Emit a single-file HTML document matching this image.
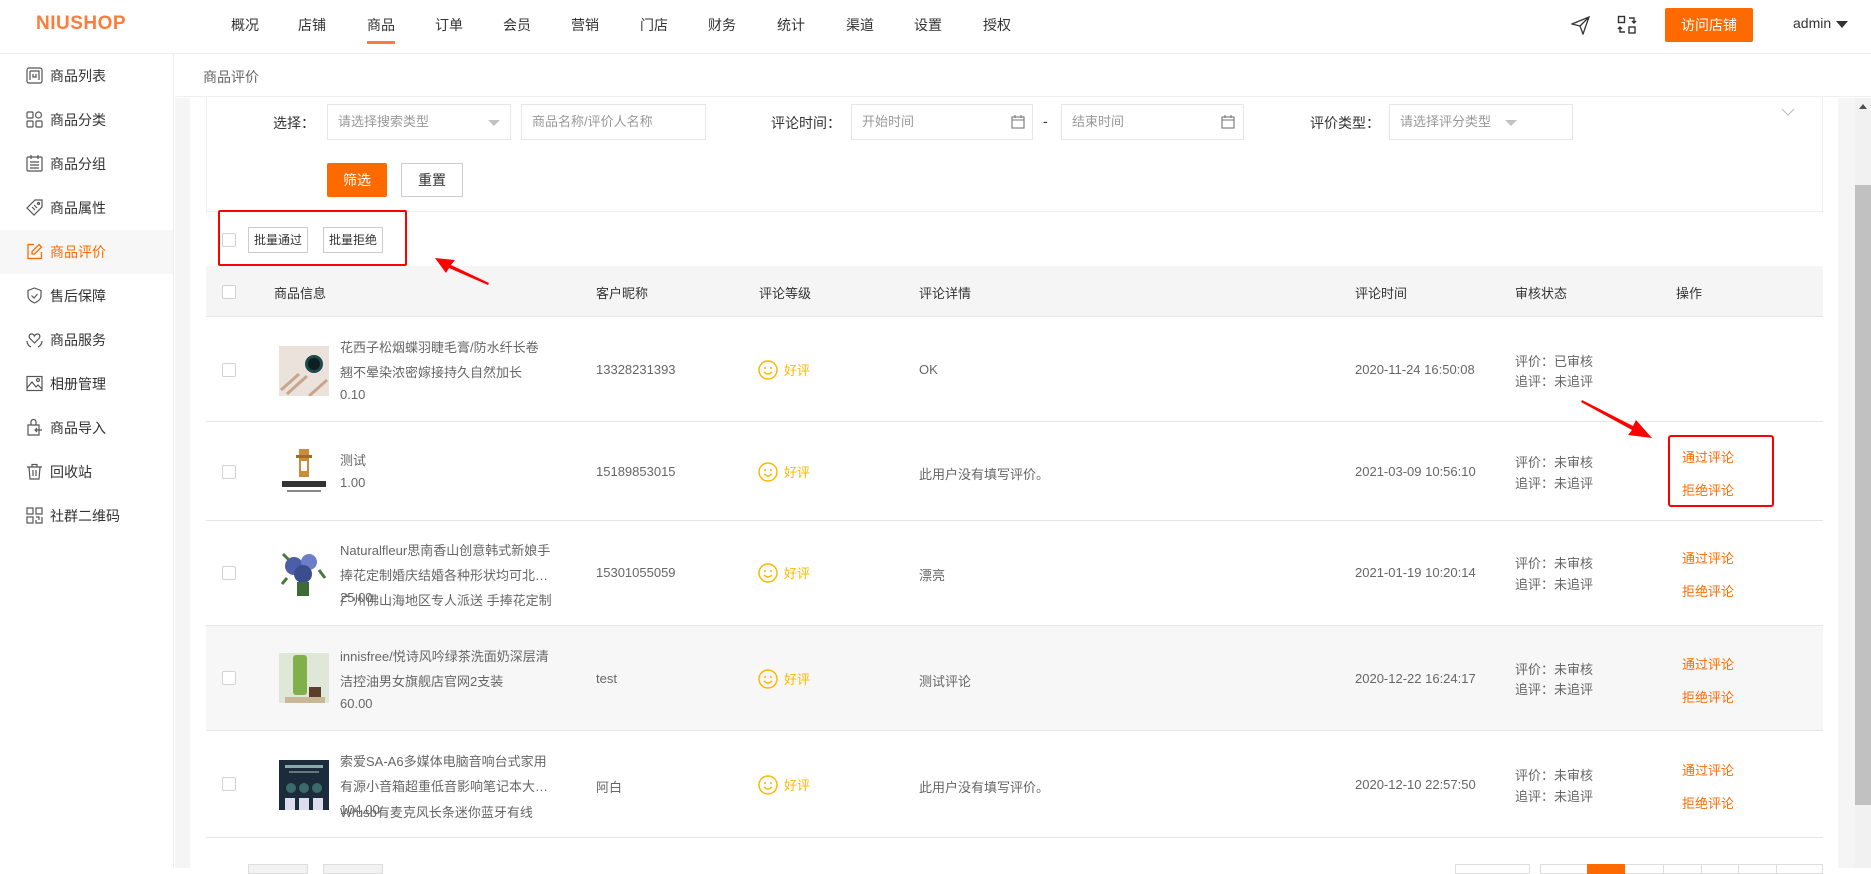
<!DOCTYPE html>
<html><head><meta charset="utf-8">
<style>
*{margin:0;padding:0;box-sizing:border-box}
body{width:1871px;height:868px;overflow:hidden;position:relative;background:#fff;font-family:"Liberation Sans","Noto Sans CJK SC",sans-serif;font-size:14px;color:#333}
.a{position:absolute;white-space:nowrap}
.hdr{left:0;top:0;width:1871px;height:54px;border-bottom:1px solid #eee;background:#fff}
.nav{top:15px;font-size:14px;color:#333}
.side{left:0;top:54px;width:174px;height:814px;border-right:1px solid #eee;background:#fff}
.si{position:absolute;left:0;width:173px;height:44px;line-height:44px;padding-left:50px;color:#333}
.si svg{position:absolute;left:26px;top:13px}
.si.act{background:#f7f7f7;color:#ff6a00}
.inp{position:absolute;border:1px solid #e6e6e6;height:36px;line-height:34px;padding-left:10px;color:#999;background:#fff;font-size:13px}
.btn{position:absolute;border:1px solid #ccc;text-align:center;background:#fff}
.th{top:279px;color:#333;font-size:13px}
.row{position:absolute;left:206px;width:1617px;border-bottom:1px solid #e6e6e6}
.cb{position:absolute;width:14px;height:14px;border:1px solid #d2d2d2;background:#fff;border-radius:2px}
.t{position:absolute;white-space:nowrap;color:#666;font-size:13px}
.ok{color:#ff6a00}
</style></head><body>

<div class="a hdr"></div>
<div class="a" style="left:36px;top:13px;font-size:19px;font-weight:bold;color:#fd7c3c;letter-spacing:0.5px">NIUSHOP</div>
<div class="a nav" style="left:231px">概况</div>
<div class="a nav" style="left:298px">店铺</div>
<div class="a nav" style="left:367px">商品</div>
<div class="a" style="left:367px;top:41px;width:28px;height:3px;background:#fd7c3c"></div>
<div class="a nav" style="left:435px">订单</div>
<div class="a nav" style="left:503px">会员</div>
<div class="a nav" style="left:571px">营销</div>
<div class="a nav" style="left:640px">门店</div>
<div class="a nav" style="left:708px">财务</div>
<div class="a nav" style="left:777px">统计</div>
<div class="a nav" style="left:846px">渠道</div>
<div class="a nav" style="left:914px">设置</div>
<div class="a nav" style="left:983px">授权</div>
<svg class="a" style="left:1571px;top:16px" width="19" height="19" viewBox="0 0 19 19" fill="none" stroke="#333" stroke-width="1.3"><path d="M1 8 L18 1 L12 18 L9 10 Z M9 10 L18 1"/></svg>
<svg class="a" style="left:1617px;top:15px" width="20" height="20" viewBox="0 0 20 20" fill="none" stroke="#333" stroke-width="1.4"><rect x="1.5" y="1.5" width="6" height="6"/><rect x="12" y="12" width="6" height="6"/><path d="M12 3 H17 V8 M15 6 L17 8 L19 6 M8 17 H3 V12 M1 14 L3 12 L5 14"/></svg>
<div class="a" style="left:1665px;top:8px;width:88px;height:34px;background:#ff6a00;border-radius:2px;color:#fff;text-align:center;line-height:34px;font-size:14px">访问店铺</div>
<div class="a" style="left:1793px;top:15px;color:#333">admin</div>
<div class="a" style="left:1836px;top:21px;width:0;height:0;border-left:6px solid transparent;border-right:6px solid transparent;border-top:7px solid #333"></div>

<div class="a side"></div>
<div class="si" style="top:54px"><svg width="17" height="17" viewBox="0 0 17 17" fill="none" stroke="#555" stroke-width="1.2"><rect x="1" y="1" width="15" height="15" rx="2"/><path d="M4 4 V13 M4 4 H13 V13 M7 7 V10 H10 V7"/></svg>商品列表</div>
<div class="si" style="top:98px"><svg width="17" height="17" viewBox="0 0 17 17" fill="none" stroke="#555" stroke-width="1.2"><rect x="1" y="1" width="6" height="6" rx="1"/><circle cx="12.5" cy="4" r="3"/><rect x="1" y="10" width="6" height="6" rx="1"/><rect x="10" y="10" width="6" height="6" rx="1"/></svg>商品分类</div>
<div class="si" style="top:142px"><svg width="17" height="17" viewBox="0 0 17 17" fill="none" stroke="#555" stroke-width="1.2"><rect x="1" y="2" width="15" height="14" rx="1"/><path d="M5 0 V4 M12 0 V4 M4 7 H13 M4 10 H13 M4 13 H13"/></svg>商品分组</div>
<div class="si" style="top:186px"><svg width="17" height="17" viewBox="0 0 17 17" fill="none" stroke="#555" stroke-width="1.2"><path d="M9 1 H16 V8 L8 16 L1 9 Z M6 8 L9 11 M8 6 L11 9"/><circle cx="12.5" cy="4.5" r="1"/></svg>商品属性</div>
<div class="si act" style="top:230px"><svg width="17" height="17" viewBox="0 0 17 17" fill="none" stroke="#ff6a00" stroke-width="1.3"><path d="M8 1.5 H2 V15.5 H15.5 V9"/><path d="M13 1.5 L15.5 4 L8.5 11 H6 V8.5 Z"/></svg>商品评价</div>
<div class="si" style="top:274px"><svg width="17" height="17" viewBox="0 0 17 17" fill="none" stroke="#555" stroke-width="1.2"><path d="M8.5 1 L15 3.5 V9 C15 12 12 14.5 8.5 16 C5 14.5 2 12 2 9 V3.5 Z M5.5 8.5 L8 11 L11.5 7"/></svg>售后保障</div>
<div class="si" style="top:318px"><svg width="17" height="17" viewBox="0 0 17 17" fill="none" stroke="#555" stroke-width="1.2"><path d="M8.5 12 L4 7.5 C2.5 6 3 3 5.5 3 C7 3 8 4 8.5 5 C9 4 10 3 11.5 3 C14 3 14.5 6 13 7.5 Z M1 10 C1 13 3 15 5 16 M16 10 C16 13 14 15 12 16"/></svg>商品服务</div>
<div class="si" style="top:362px"><svg width="17" height="17" viewBox="0 0 17 17" fill="none" stroke="#555" stroke-width="1.2"><rect x="1" y="1.5" width="15" height="14"/><path d="M1 13 L6 7 L10 12 L12 10 L16 14"/><circle cx="12" cy="5" r="1.5"/></svg>相册管理</div>
<div class="si" style="top:406px"><svg width="17" height="17" viewBox="0 0 17 17" fill="none" stroke="#555" stroke-width="1.2"><path d="M2 6 H13 V16 H2 Z M5 6 V3 A2.5 2.5 0 0 1 10 3 V6 M16 11 H9 M11 9 L9 11 L11 13"/></svg>商品导入</div>
<div class="si" style="top:450px"><svg width="17" height="17" viewBox="0 0 17 17" fill="none" stroke="#555" stroke-width="1.2"><path d="M1 4 H16 M6 4 V1.5 H11 V4 M3 4 L4 16 H13 L14 4 M7 7 V13 M10 7 V13"/></svg>回收站</div>
<div class="si" style="top:494px"><svg width="17" height="17" viewBox="0 0 17 17" fill="none" stroke="#555" stroke-width="1.2"><rect x="1" y="1" width="6" height="6"/><rect x="10" y="1" width="6" height="6"/><rect x="1" y="10" width="6" height="6"/><path d="M10 10 H13 V13 M16 10 V16 H10 V13"/></svg>社群二维码</div>

<div class="a" style="left:175px;top:55px;width:1696px;height:42px;border-bottom:1px solid #eee;background:#fff"></div>
<div class="a" style="left:203px;top:67px;color:#666">商品评价</div>
<div class="a" style="left:175px;top:98px;width:1696px;height:770px;background:#f5f5f5"></div>
<div class="a" style="left:190px;top:98px;width:1648px;height:770px;background:#fff"></div>
<div class="a" style="left:1855px;top:98px;width:16px;height:770px;background:#f1f1f1"></div>
<div class="a" style="left:1855px;top:185px;width:16px;height:620px;background:#c1c1c1"></div>
<div class="a" style="left:1859px;top:104px;width:0;height:0;border-left:4px solid transparent;border-right:4px solid transparent;border-bottom:5px solid #505050"></div>

<div class="a" style="left:206px;top:97px;width:1617px;height:115px;border:1px solid #eee;border-top:none"></div>
<div class="a" style="left:273px;top:113px;color:#333">选择：</div>
<div class="inp" style="left:327px;top:104px;width:184px">请选择搜索类型</div>
<div class="a" style="left:488px;top:120px;border-left:6px solid transparent;border-right:6px solid transparent;border-top:6px solid #c2c2c2"></div>
<div class="inp" style="left:521px;top:104px;width:185px">商品名称/评价人名称</div>
<div class="a" style="left:771px;top:113px">评论时间：</div>
<div class="inp" style="left:851px;top:104px;width:182px">开始时间</div>
<svg class="a" style="left:1011px;top:115px" width="14" height="14" viewBox="0 0 14 14" fill="none" stroke="#777" stroke-width="1.1"><rect x="1" y="2" width="12" height="11"/><path d="M1 5 H13 M4 0 V3 M10 0 V3"/></svg>
<div class="a" style="left:1043px;top:113px">-</div>
<div class="inp" style="left:1061px;top:104px;width:183px">结束时间</div>
<svg class="a" style="left:1221px;top:115px" width="14" height="14" viewBox="0 0 14 14" fill="none" stroke="#777" stroke-width="1.1"><rect x="1" y="2" width="12" height="11"/><path d="M1 5 H13 M4 0 V3 M10 0 V3"/></svg>
<div class="a" style="left:1310px;top:113px">评价类型：</div>
<div class="inp" style="left:1389px;top:104px;width:184px">请选择评分类型</div>
<div class="a" style="left:1505px;top:120px;border-left:6px solid transparent;border-right:6px solid transparent;border-top:6px solid #c2c2c2"></div>
<svg class="a" style="left:1781px;top:108px" width="14" height="8" viewBox="0 0 14 8" fill="none" stroke="#bbb" stroke-width="1"><path d="M1 1 L7 7 L13 1"/></svg>
<div class="a" style="left:327px;top:163px;width:60px;height:34px;background:#ff6a00;color:#fff;text-align:center;line-height:34px;border-radius:2px">筛选</div>
<div class="btn" style="left:401px;top:163px;width:62px;height:34px;line-height:32px">重置</div>

<div class="cb" style="left:222px;top:233px"></div>
<div class="btn" style="left:248px;top:227px;width:60px;height:26px;line-height:24px;font-size:12px;color:#333">批量通过</div>
<div class="btn" style="left:323px;top:227px;width:60px;height:26px;line-height:24px;font-size:12px;color:#333">批量拒绝</div>
<div class="a" style="left:218px;top:210px;width:189px;height:56px;border:2px solid #f00;border-radius:2px"></div>

<div class="a" style="left:206px;top:266px;width:1617px;height:51px;background:#f5f5f5;border-bottom:1px solid #e6e6e6"></div>
<svg class="a" style="left:430px;top:252px;z-index:5" width="65" height="35" viewBox="0 0 65 35"><path d="M5 6 L25 8 L21 13 L59 31 L58 33 L19 16 L16 21 Z" fill="#f00"/></svg>
<div class="cb" style="left:222px;top:285px"></div>
<div class="a th" style="left:274px;top:283px">商品信息</div>
<div class="a th" style="left:596px;top:283px">客户昵称</div>
<div class="a th" style="left:759px;top:283px">评论等级</div>
<div class="a th" style="left:919px;top:283px">评论详情</div>
<div class="a th" style="left:1355px;top:283px">评论时间</div>
<div class="a th" style="left:1515px;top:283px">审核状态</div>
<div class="a th" style="left:1676px;top:283px">操作</div>

<div class="row" style="top:317px;height:105px"></div>
<div class="row" style="top:422px;height:99px"></div>
<div class="row" style="top:521px;height:105px"></div>
<div class="row" style="top:626px;height:105px;background:#f7f7f7"></div>
<div class="row" style="top:731px;height:107px"></div>

<div class="cb" style="left:222px;top:363px"></div>
<svg class="a" style="left:279px;top:346px" width="50" height="50"><rect width="50" height="50" fill="#ece2dc"/><path d="M2 44 L20 28 M8 48 L28 30 M30 50 L48 34" stroke="#c7a68e" stroke-width="3"/><circle cx="35" cy="18" r="9" fill="#1d4a4a"/><circle cx="35" cy="18" r="6" fill="#0e1f22"/></svg>
<div class="t" style="left:340px;top:337px">花西子松烟蝶羽睫毛膏/防水纤长卷</div>
<div class="t" style="left:340px;top:362px">翘不晕染浓密嫁接持久自然加长</div>
<div class="t" style="left:340px;top:387px">0.10</div>
<div class="t" style="left:596px;top:362px">13328231393</div>
<div class="t" style="left:919px;top:362px">OK</div>
<div class="t" style="left:1355px;top:362px">2020-11-24 16:50:08</div>
<div class="t" style="left:1515px;top:351px">评价：已审核</div>
<div class="t" style="left:1515px;top:371px">追评：未追评</div>

<div class="cb" style="left:222px;top:465px"></div>
<svg class="a" style="left:279px;top:447px" width="50" height="50"><rect width="50" height="50" fill="#fff"/><rect x="20" y="2" width="10" height="28" fill="#c98c3a"/><rect x="17" y="8" width="16" height="3" fill="#a56b22"/><rect x="22" y="14" width="6" height="10" fill="#fff"/><rect x="3" y="34" width="44" height="6" fill="#333"/><rect x="8" y="43" width="34" height="2" fill="#888"/></svg>
<div class="t" style="left:340px;top:450px">测试</div>
<div class="t" style="left:340px;top:475px">1.00</div>
<div class="t" style="left:596px;top:464px">15189853015</div>
<div class="t" style="left:919px;top:464px">此用户没有填写评价。</div>
<div class="t" style="left:1355px;top:464px">2021-03-09 10:56:10</div>
<div class="t" style="left:1515px;top:452px">评价：未审核</div>
<div class="t" style="left:1515px;top:473px">追评：未追评</div>
<div class="t ok" style="left:1682px;top:447px">通过评论</div>
<div class="t ok" style="left:1682px;top:480px">拒绝评论</div>
<div class="a" style="left:1668px;top:435px;width:106px;height:72px;border:2px solid #f00;border-radius:3px"></div>
<svg class="a" style="left:1578px;top:398px" width="80" height="45" viewBox="0 0 80 45"><path d="M3 4 L4 2 L55 28 L58 22 L74 40 L50 37 L54 32 Z" fill="#f00"/></svg>

<div class="cb" style="left:222px;top:566px"></div>
<svg class="a" style="left:279px;top:548px" width="50" height="50"><rect width="50" height="50" fill="#fff"/><circle cx="15" cy="18" r="9" fill="#4b5fa8"/><circle cx="30" cy="14" r="8" fill="#6b7fc6"/><circle cx="24" cy="26" r="9" fill="#3c4d8e"/><path d="M10 12 L4 6 M40 22 L46 30 M8 30 L3 36" stroke="#4a7a3a" stroke-width="3"/><rect x="18" y="34" width="12" height="14" fill="#3e6a36"/></svg>
<div class="t" style="left:340px;top:540px">Naturalfleur思南香山创意韩式新娘手</div>
<div class="t" style="left:340px;top:565px">捧花定制婚庆结婚各种形状均可北…</div>
<div class="t" style="left:340px;top:590px">25.00</div>
<div class="t" style="left:340px;top:590px">广州佛山海地区专人派送 手捧花定制</div>
<div class="t" style="left:596px;top:565px">15301055059</div>
<div class="t" style="left:919px;top:565px">漂亮</div>
<div class="t" style="left:1355px;top:565px">2021-01-19 10:20:14</div>
<div class="t" style="left:1515px;top:553px">评价：未审核</div>
<div class="t" style="left:1515px;top:574px">追评：未追评</div>
<div class="t ok" style="left:1682px;top:548px">通过评论</div>
<div class="t ok" style="left:1682px;top:581px">拒绝评论</div>

<div class="cb" style="left:222px;top:671px"></div>
<svg class="a" style="left:279px;top:653px" width="50" height="50"><rect width="50" height="50" fill="#dfe7d8"/><rect x="14" y="2" width="14" height="40" rx="3" fill="#7fb04a"/><rect x="30" y="34" width="12" height="12" fill="#5a3f2c"/><rect x="6" y="44" width="40" height="6" fill="#c9b898"/></svg>
<div class="t" style="left:340px;top:646px">innisfree/悦诗风吟绿茶洗面奶深层清</div>
<div class="t" style="left:340px;top:671px">洁控油男女旗舰店官网2支装</div>
<div class="t" style="left:340px;top:696px">60.00</div>
<div class="t" style="left:596px;top:671px">test</div>
<div class="t" style="left:919px;top:671px">测试评论</div>
<div class="t" style="left:1355px;top:671px">2020-12-22 16:24:17</div>
<div class="t" style="left:1515px;top:659px">评价：未审核</div>
<div class="t" style="left:1515px;top:679px">追评：未追评</div>
<div class="t ok" style="left:1682px;top:654px">通过评论</div>
<div class="t ok" style="left:1682px;top:687px">拒绝评论</div>

<div class="cb" style="left:222px;top:777px"></div>
<svg class="a" style="left:279px;top:760px" width="50" height="50"><rect width="50" height="50" fill="#1c2b3c"/><rect x="6" y="5" width="38" height="3" fill="#8aa"/><rect x="10" y="11" width="30" height="2" fill="#677"/><circle cx="12" cy="28" r="5" fill="#3a6a6a"/><circle cx="25" cy="28" r="5" fill="#3a6a6a"/><circle cx="38" cy="28" r="5" fill="#3a6a6a"/><rect x="6" y="38" width="10" height="12" fill="#dde"/><rect x="20" y="38" width="10" height="12" fill="#dde"/><rect x="34" y="38" width="10" height="12" fill="#dde"/></svg>
<div class="t" style="left:340px;top:751px">索爱SA-A6多媒体电脑音响台式家用</div>
<div class="t" style="left:340px;top:776px">有源小音箱超重低音影响笔记本大…</div>
<div class="t" style="left:340px;top:802px">104.00</div>
<div class="t" style="left:340px;top:802px">W/usb有麦克风长条迷你蓝牙有线</div>
<div class="t" style="left:596px;top:777px">阿白</div>
<div class="t" style="left:919px;top:777px">此用户没有填写评价。</div>
<div class="t" style="left:1355px;top:777px">2020-12-10 22:57:50</div>
<div class="t" style="left:1515px;top:765px">评价：未审核</div>
<div class="t" style="left:1515px;top:786px">追评：未追评</div>
<div class="t ok" style="left:1682px;top:760px">通过评论</div>
<div class="t ok" style="left:1682px;top:793px">拒绝评论</div>

<svg class="a" style="left:758px;top:360px" width="80" height="20"><circle cx="10" cy="10" r="9" fill="none" stroke="#ffb800" stroke-width="1.5"/><circle cx="7" cy="8" r="1" fill="#ffb800"/><circle cx="13" cy="8" r="1" fill="#ffb800"/><path d="M6 12 Q10 16 14 12" fill="none" stroke="#ffb800" stroke-width="1.4"/><text x="26" y="15" font-size="13" fill="#ffb800" font-family="Liberation Sans, Noto Sans CJK SC, sans-serif">好评</text></svg>
<svg class="a" style="left:758px;top:462px" width="80" height="20"><circle cx="10" cy="10" r="9" fill="none" stroke="#ffb800" stroke-width="1.5"/><circle cx="7" cy="8" r="1" fill="#ffb800"/><circle cx="13" cy="8" r="1" fill="#ffb800"/><path d="M6 12 Q10 16 14 12" fill="none" stroke="#ffb800" stroke-width="1.4"/><text x="26" y="15" font-size="13" fill="#ffb800" font-family="Liberation Sans, Noto Sans CJK SC, sans-serif">好评</text></svg>
<svg class="a" style="left:758px;top:563px" width="80" height="20"><circle cx="10" cy="10" r="9" fill="none" stroke="#ffb800" stroke-width="1.5"/><circle cx="7" cy="8" r="1" fill="#ffb800"/><circle cx="13" cy="8" r="1" fill="#ffb800"/><path d="M6 12 Q10 16 14 12" fill="none" stroke="#ffb800" stroke-width="1.4"/><text x="26" y="15" font-size="13" fill="#ffb800" font-family="Liberation Sans, Noto Sans CJK SC, sans-serif">好评</text></svg>
<svg class="a" style="left:758px;top:669px" width="80" height="20"><circle cx="10" cy="10" r="9" fill="none" stroke="#ffb800" stroke-width="1.5"/><circle cx="7" cy="8" r="1" fill="#ffb800"/><circle cx="13" cy="8" r="1" fill="#ffb800"/><path d="M6 12 Q10 16 14 12" fill="none" stroke="#ffb800" stroke-width="1.4"/><text x="26" y="15" font-size="13" fill="#ffb800" font-family="Liberation Sans, Noto Sans CJK SC, sans-serif">好评</text></svg>
<svg class="a" style="left:758px;top:775px" width="80" height="20"><circle cx="10" cy="10" r="9" fill="none" stroke="#ffb800" stroke-width="1.5"/><circle cx="7" cy="8" r="1" fill="#ffb800"/><circle cx="13" cy="8" r="1" fill="#ffb800"/><path d="M6 12 Q10 16 14 12" fill="none" stroke="#ffb800" stroke-width="1.4"/><text x="26" y="15" font-size="13" fill="#ffb800" font-family="Liberation Sans, Noto Sans CJK SC, sans-serif">好评</text></svg>

<div class="a" style="left:248px;top:864px;width:60px;height:10px;border:1px solid #ddd;background:#f2f2f2"></div>
<div class="a" style="left:323px;top:864px;width:60px;height:10px;border:1px solid #ddd;background:#f2f2f2"></div>
<div class="a" style="left:1455px;top:864px;width:75px;height:10px;border:1px solid #ddd"></div>
<div class="a" style="left:1540px;top:864px;width:283px;height:10px;border:1px solid #ddd"></div>
<div class="a" style="left:1587px;top:864px;width:38px;height:10px;background:#ff6a00"></div>
<div class="a" style="left:1663px;top:864px;width:1px;height:10px;background:#ddd"></div>
<div class="a" style="left:1701px;top:864px;width:1px;height:10px;background:#ddd"></div>
<div class="a" style="left:1738px;top:864px;width:1px;height:10px;background:#ddd"></div>
<div class="a" style="left:1776px;top:864px;width:1px;height:10px;background:#ddd"></div>
</body></html>
